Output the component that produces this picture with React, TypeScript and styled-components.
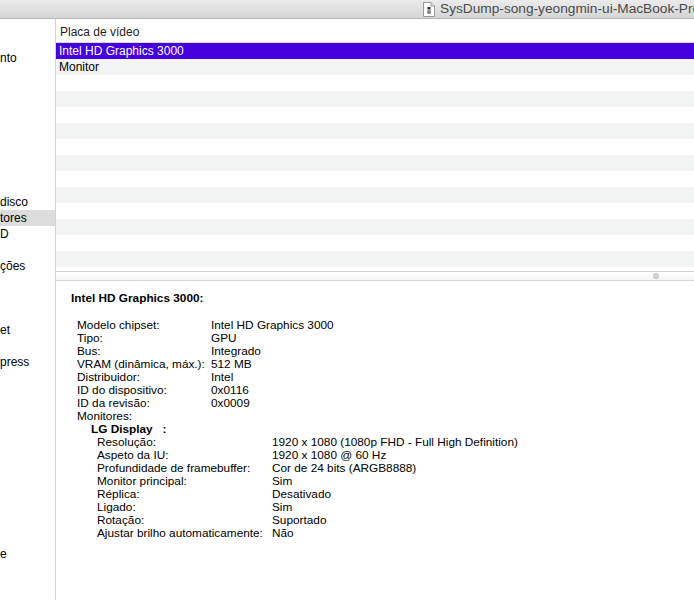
import styled, { createGlobalStyle } from 'styled-components';

interface IField {
	label: string;
	value: string;
}

const GlobalStyle = createGlobalStyle`
	html, body {
		margin: 0;
		padding: 0;
		background: #ffffff;
	}
	body {
		font-family: 'Liberation Sans', Arial, sans-serif;
		color: #000000;
		-webkit-font-smoothing: antialiased;
	}
`;

// sidebar is scrolled sideways, so only the tail of each label shows
const sidebarRows: Record<number, string> = {
	0: 'nto',
	9: 'disco',
	10: 'tores',
	11: 'D',
	13: 'ções',
	17: 'et',
	19: 'press',
	31: 'e',
};
const ACTIVE_ROW = 10;

const listRows = ['Intel HD Graphics 3000', 'Monitor'];

const gpuFields: IField[] = [
	{ label: 'Modelo chipset:', value: 'Intel HD Graphics 3000' },
	{ label: 'Tipo:', value: 'GPU' },
	{ label: 'Bus:', value: 'Integrado' },
	{ label: 'VRAM (dinâmica, máx.):', value: '512 MB' },
	{ label: 'Distribuidor:', value: 'Intel' },
	{ label: 'ID do dispositivo:', value: '0x0116' },
	{ label: 'ID da revisão:', value: '0x0009' },
];

const displayFields: IField[] = [
	{ label: 'Resolução:', value: '1920 x 1080 (1080p FHD - Full High Definition)' },
	{ label: 'Aspeto da IU:', value: '1920 x 1080 @ 60 Hz' },
	{ label: 'Profundidade de framebuffer:', value: 'Cor de 24 bits (ARGB8888)' },
	{ label: 'Monitor principal:', value: 'Sim' },
	{ label: 'Réplica:', value: 'Desativado' },
	{ label: 'Ligado:', value: 'Sim' },
	{ label: 'Rotação:', value: 'Suportado' },
	{ label: 'Ajustar brilho automaticamente:', value: 'Não' },
];

const DocIcon = () => (
	<svg width="12" height="15" viewBox="0 0 12 15" style={{ flexShrink: 0 }}>
		<path d="M0.5 0.5 H8 L11.5 4 V14.5 H0.5 Z" fill="#fdfdfd" stroke="#9a9a9a" />
		<path d="M8 0.5 V4 H11.5" fill="#e4e4e4" stroke="#9a9a9a" />
		<rect x="4.5" y="5" width="3" height="2.5" fill="#2a2a2a" />
		<rect x="4.5" y="8.5" width="3" height="3" fill="#2a2a2a" />
		<rect x="5.3" y="9.4" width="1.4" height="1.2" fill="#ffffff" />
	</svg>
);

const App = () => {
	return (
		<>
			<GlobalStyle />
			<Window>
				<TitleBar>
					<DocIcon />
					<TitleText>SysDump-song-yeongmin-ui-MacBook-Pro.spx</TitleText>
				</TitleBar>
				<Body>
					<Sidebar>
						{Array.from({ length: 34 }, (_, i) => (
							<SidebarItem key={i} $active={i === ACTIVE_ROW}>
								{sidebarRows[i] ?? ''}
							</SidebarItem>
						))}
					</Sidebar>
					<Main>
						<ListHeader>Placa de vídeo</ListHeader>
						<List>
							{Array.from({ length: 15 }, (_, i) => (
								<ListRow key={i} $selected={i === 0} $striped={i % 2 === 1}>
									{listRows[i] ?? ''}
								</ListRow>
							))}
						</List>
						<Splitter>
							<SplitterKnob />
						</Splitter>
						<Detail>
							<DetailTitle>Intel HD Graphics 3000:</DetailTitle>
							<FieldGrid $labelWidth={134}>
								{gpuFields.map((field) => (
									<Field key={field.label}>
										<span>{field.label}</span>
										<span>{field.value}</span>
									</Field>
								))}
								<Field>
									<span>Monitores:</span>
									<span />
								</Field>
							</FieldGrid>
							<SubSection>
								<SubTitle>LG Display&nbsp;&nbsp; :</SubTitle>
								<FieldGrid $labelWidth={175}>
									{displayFields.map((field) => (
										<Field key={field.label}>
											<span>{field.label}</span>
											<span>{field.value}</span>
										</Field>
									))}
								</FieldGrid>
							</SubSection>
						</Detail>
					</Main>
				</Body>
			</Window>
		</>
	);
};

const Window = styled.div`
	width: 694px;
	height: 600px;
	display: flex;
	flex-direction: column;
	overflow: hidden;
`;

const TitleBar = styled.div`
	height: 18px;
	flex-shrink: 0;
	display: flex;
	align-items: center;
	gap: 5px;
	padding-left: 423px;
	background: linear-gradient(to bottom, #ebebeb, #d5d5d5);
	border-bottom: 1px solid #b6b6b6;
	white-space: nowrap;
	overflow: hidden;
`;

const TitleText = styled.span`
	flex-shrink: 0;
	font-size: 13.7px;
	color: #4b4b4b;
	line-height: 18px;
`;

const Body = styled.div`
	flex: 1;
	display: flex;
	min-height: 0;
`;

const Sidebar = styled.div`
	width: 55px;
	flex-shrink: 0;
	padding-top: 31px;
	border-right: 1px solid #d3d3d3;
	overflow: hidden;
	display: flex;
	flex-direction: column;
`;

const SidebarItem = styled.div<{ $active: boolean }>`
	height: 16px;
	flex-shrink: 0;
	line-height: 17px;
	font-size: 12px;
	white-space: nowrap;
	background: ${({ $active }) => ($active ? '#dcdcdc' : 'transparent')};
`;

const Main = styled.div`
	flex: 1;
	display: flex;
	flex-direction: column;
	min-width: 0;
`;

const ListHeader = styled.div`
	height: 17px;
	flex-shrink: 0;
	padding: 6px 0 0 4px;
	font-size: 12px;
	line-height: 15px;
	color: #1e1e1e;
	border-bottom: 1px solid #d9d9d9;
`;

const List = styled.div`
	height: 228px;
	flex-shrink: 0;
	overflow: hidden;
`;

const ListRow = styled.div<{ $selected: boolean; $striped: boolean }>`
	height: 16px;
	line-height: 16px;
	padding-left: 3px;
	font-size: 12px;
	white-space: nowrap;
	color: ${({ $selected }) => ($selected ? '#ffffff' : '#000000')};
	background: ${({ $selected, $striped }) =>
		$selected ? '#4600dd' : $striped ? '#f3f4f4' : '#ffffff'};
`;

const Splitter = styled.div`
	height: 8px;
	flex-shrink: 0;
	position: relative;
	border-top: 1px solid #d6d6d6;
	border-bottom: 1px solid #d6d6d6;
	background: linear-gradient(to bottom, #ffffff, #f5f5f5);
`;

const SplitterKnob = styled.div`
	position: absolute;
	left: 597px;
	top: 1px;
	width: 6px;
	height: 6px;
	border-radius: 50%;
	background: radial-gradient(circle at 50% 40%, #d8d8d8, #bdbdbd);
`;

const Detail = styled.div`
	flex: 1;
	padding: 11px 0 0 15px;
	font-size: 11.8px;
	line-height: 13px;
	white-space: nowrap;
	overflow: hidden;
`;

const DetailTitle = styled.div`
	font-weight: bold;
	margin-bottom: 14px;
`;

const FieldGrid = styled.div<{ $labelWidth: number }>`
	display: grid;
	grid-template-columns: ${({ $labelWidth }) => `${$labelWidth}px`} auto;
	padding-left: 6px;
`;

const Field = styled.div`
	display: contents;
`;

const SubSection = styled.div`
	padding-left: 20px;
`;

const SubTitle = styled.div`
	font-weight: bold;
`;

export default App;
